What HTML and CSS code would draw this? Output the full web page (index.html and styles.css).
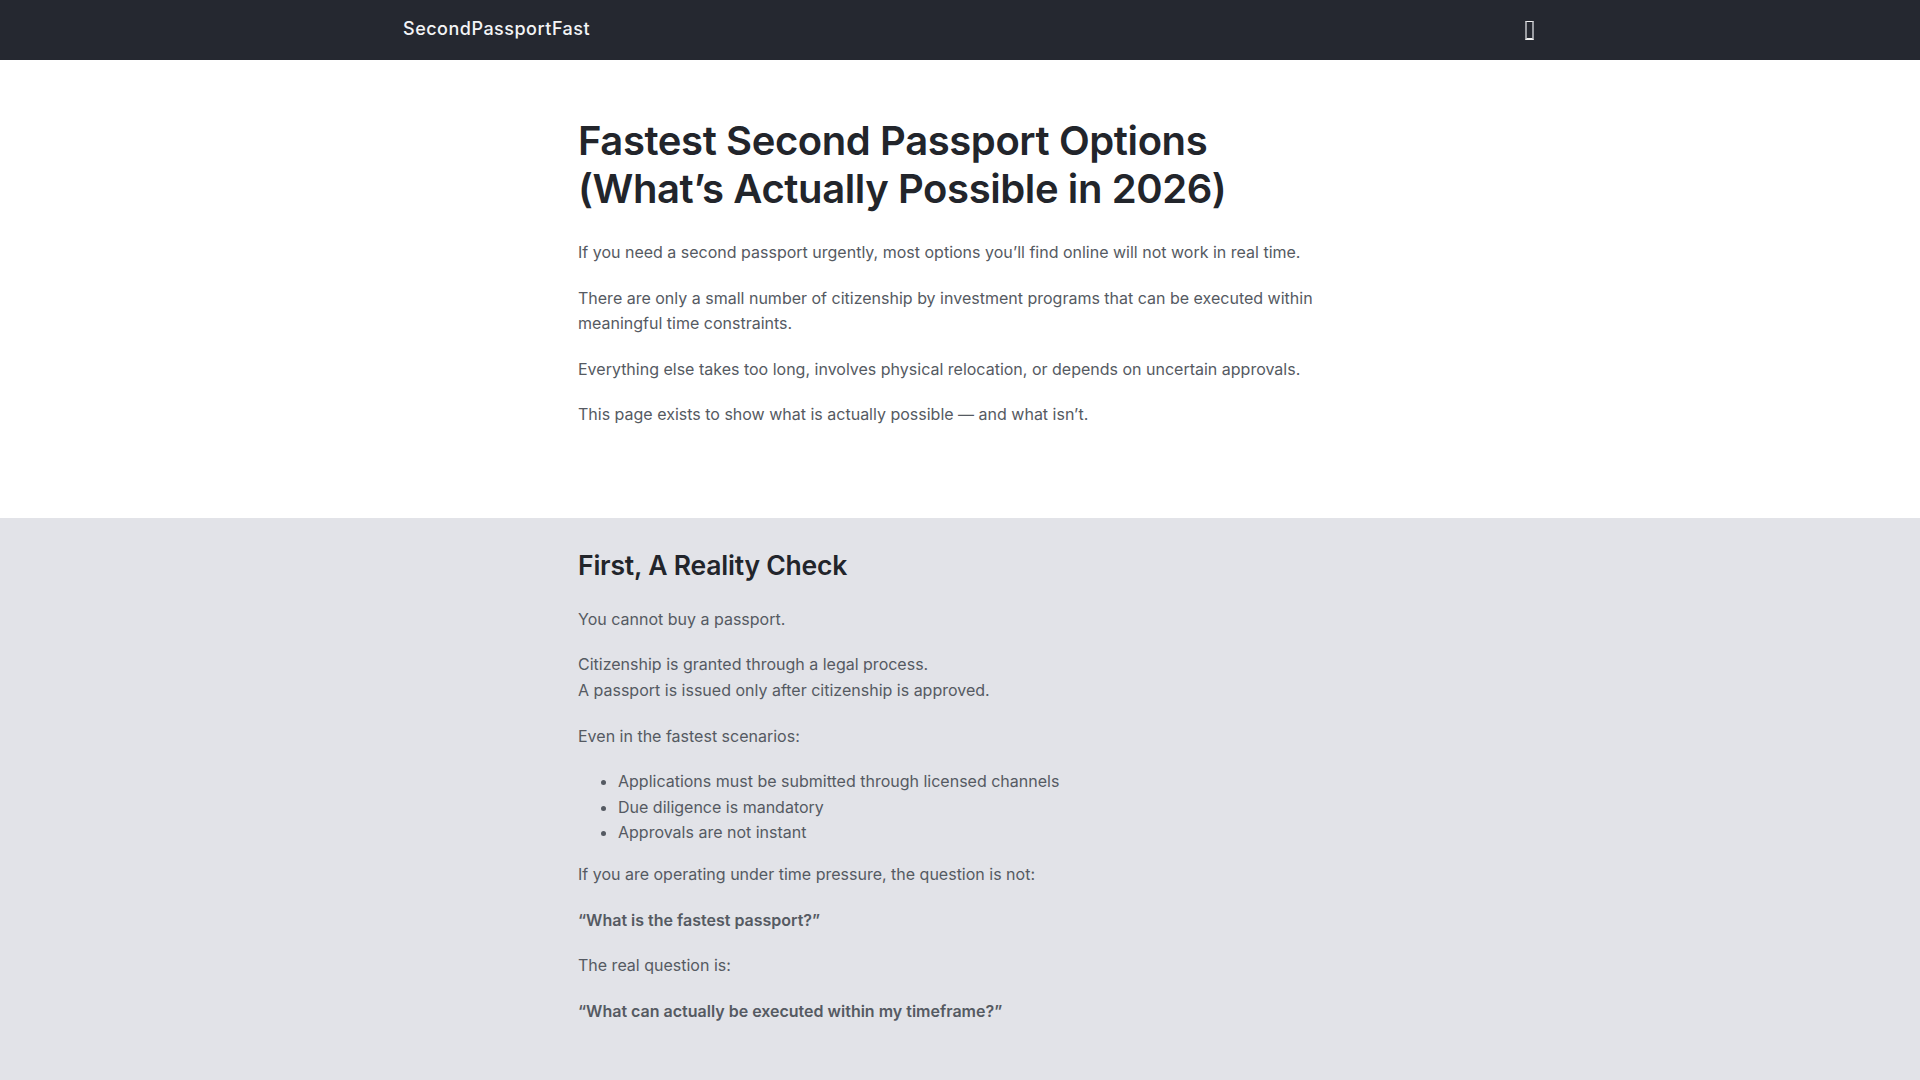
FILE: index.html
```html
<!DOCTYPE html>
<html lang="en">
<head>
<meta charset="utf-8">
<title>Fastest Second Passport Options</title>
<link rel="stylesheet" href="styles.css">
</head>
<body>
<header class="topbar">
  <div class="topbar-inner">
    <a class="brand" href="#">SecondPassportFast</a>
    <button class="menu-toggle" aria-label="Menu"><span class="tofu"></span></button>
  </div>
</header>
<main>
  <section class="hero">
    <div class="col">
      <h1>Fastest Second Passport Options<br>(What’s Actually Possible in 2026)</h1>
      <p>If you need a second passport urgently, most options you’ll find online will not work in real time.</p>
      <p>There are only a small number of citizenship by investment programs that can be executed within meaningful time constraints.</p>
      <p>Everything else takes too long, involves physical relocation, or depends on uncertain approvals.</p>
      <p>This page exists to show what is actually possible — and what isn’t.</p>
    </div>
  </section>
  <section class="reality">
    <div class="col">
      <h2>First, A Reality Check</h2>
      <p>You cannot buy a passport.</p>
      <p>Citizenship is granted through a legal process.<br>A passport is issued only after citizenship is approved.</p>
      <p>Even in the fastest scenarios:</p>
      <ul>
        <li>Applications must be submitted through licensed channels</li>
        <li>Due diligence is mandatory</li>
        <li>Approvals are not instant</li>
      </ul>
      <p>If you are operating under time pressure, the question is not:</p>
      <p><strong>“What is the fastest passport?”</strong></p>
      <p>The real question is:</p>
      <p><strong>“What can actually be executed within my timeframe?”</strong></p>
    </div>
  </section>
</main>
</body>
</html>
```

FILE: styles.css
```css
* { box-sizing: border-box; }
html, body { margin: 0; padding: 0; }
body {
  font-family: Inter, "Noto Sans", "Liberation Sans", sans-serif;
  color: #555a62;
  background: #ffffff;
  font-size: 16px;
  line-height: 1.6;
}
.topbar {
  background: #252830;
  height: 60px;
}
.topbar-inner {
  width: 1150px;
  margin: 0 auto;
  height: 100%;
  padding: 0 1px 0 18px;
  display: flex;
  align-items: center;
  justify-content: space-between;
}
.brand {
  color: #f3f4f6;
  text-decoration: none;
  font-size: 18px;
  font-weight: 500;
  letter-spacing: 0.5px;
  line-height: 1;
  margin-top: -2px;
}
.menu-toggle {
  background: none;
  border: 0;
  padding: 0;
  margin: 0;
  display: flex;
  align-items: center;
  cursor: pointer;
}
.tofu {
  display: block;
  width: 9px;
  height: 19px;
  border-top: 1px solid #f2f2f2;
  border-bottom: 2px solid #f2f2f2;
  border-left: 2px solid #9b9da2;
  border-right: 2px solid #9b9da2;
}
.col {
  max-width: 774px;
  margin: 0 auto;
  padding-left: 5px;
}
.hero {
  padding: 57px 0 70px;
}
.reality {
  background: #e2e3e8;
  padding: 32px 0 40px;
}
h1 {
  margin: 0 0 27px;
  font-size: 40px;
  line-height: 1.2;
  font-weight: 600;
  color: #22252b;
  letter-spacing: -0.4px;
}
h2 {
  margin: 0 0 25px;
  font-size: 26.5px;
  line-height: 1.2;
  font-weight: 600;
  color: #22252b;
  letter-spacing: -0.2px;
}
p {
  margin: 0 0 20px;
}
ul {
  margin: 16px 0;
  padding-left: 40px;
}
strong {
  font-weight: 600;
}
```
